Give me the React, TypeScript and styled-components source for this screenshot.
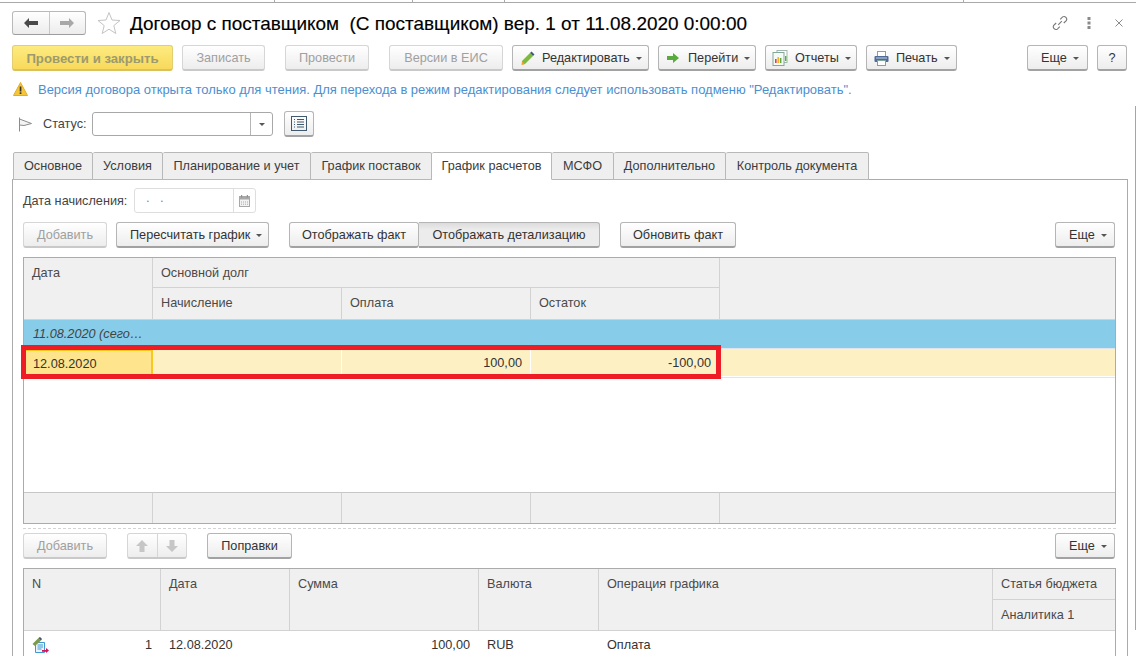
import React, { FC, ReactNode } from 'react'
import styled, { createGlobalStyle, css } from 'styled-components'

const GlobalStyle = createGlobalStyle`
  html, body {
    margin: 0;
    background: #fff;
    font-family: "Liberation Sans", Arial, sans-serif;
    font-size: 12.7px;
    color: #333;
  }
`

const Page = styled.div`
  position: relative;
  width: 1136px;
  height: 656px;
  overflow: hidden;
  background: #fff;
`

const TopStrip = styled.div`
  display: flex;
  height: 2px;
  border-bottom: 1px solid #a9a9a9;
`

const TopTick = styled.i<{ $w: number }>`
  display: block;
  width: ${(p) => p.$w}px;
  height: 2px;
  border-right: 1px solid #a9a9a9;
  box-sizing: border-box;
`

const TitleRow = styled.div`
  display: flex;
  align-items: center;
  height: 24px;
  margin-top: 8px;
  padding: 0 12px;
`

const NavGroup = styled.div`
  display: flex;
  width: 74px;
  height: 24px;
  box-sizing: border-box;
  border: 1px solid #b9b9b9;
  border-bottom-color: #9d9d9d;
  border-radius: 3px;
  background: linear-gradient(#fff, #ececec);
`

const NavCell = styled.div<{ $last?: boolean }>`
  flex: 1;
  display: flex;
  align-items: center;
  justify-content: center;
  ${(p) => !p.$last && 'border-right: 1px solid #c8c8c8;'}
`

const StarSlot = styled.span`
  display: flex;
  margin-left: 11px;
`

const Title = styled.h1`
  margin: 1px 0 0 9px;
  font-size: 18.96px;
  font-weight: 400;
  color: #000;
  white-space: pre;
  -webkit-text-stroke: 0.15px #000;
`

const TitleTools = styled.div`
  display: flex;
  align-items: center;
  margin-left: auto;
  margin-right: 1px;
  gap: 19px;
`

const CloseSlot = styled.span`
  display: flex;
  margin-left: 5px;
`

const Toolbar = styled.div<{ $top?: number }>`
  display: flex;
  align-items: stretch;
  height: 26px;
  margin-top: ${(p) => p.$top ?? 9}px;
`

const MainToolbar = styled(Toolbar)`
  padding-left: 12px;
`

const buttonFace = css`
  background: linear-gradient(#ffffff, #ededed);
  border: 1px solid #b5b5b5;
  border-bottom: 2px solid #a2a2a2;
  border-radius: 3px;
`

const Button = styled.div<{
  $w: number
  $ml?: number
  $off?: boolean
  $primary?: boolean
  $left?: boolean
  $pl?: number
}>`
  ${buttonFace}
  display: flex;
  align-items: center;
  justify-content: ${(p) => (p.$left ? 'flex-start' : 'center')};
  box-sizing: border-box;
  width: ${(p) => p.$w}px;
  margin-left: ${(p) => p.$ml ?? 0}px;
  padding-left: ${(p) => p.$pl ?? 0}px;
  padding-top: 1px;
  white-space: nowrap;
  color: #333;
  ${(p) =>
    p.$off &&
    css`
      color: #a0a0a0;
      border-color: #d6d6d6;
      border-bottom-color: #c9c9c9;
    `}
  ${(p) =>
    p.$primary &&
    css`
      background: linear-gradient(#fdeb7f, #f8d95c);
      border-color: #e3cf73;
      border-bottom-color: #d8c25f;
      color: #9c9a6e;
      font-weight: 700;
      font-size: 13.2px;
    `}
`

const PressedButton = styled(Button)`
  background: linear-gradient(#dcdcdc, #ececec 30%, #ececec);
  border-top-left-radius: 0;
  border-bottom-left-radius: 0;
  border-left: 0;
`

const Caret = styled.i<{ $ml?: number }>`
  display: block;
  width: 0;
  height: 0;
  margin-left: ${(p) => p.$ml ?? 6}px;
  margin-top: 1px;
  border-left: 3px solid transparent;
  border-right: 3px solid transparent;
  border-top: 3px solid #555;
`

const IconSlot = styled.span<{ $mr?: number }>`
  display: flex;
  margin-right: ${(p) => p.$mr ?? 8}px;
`

const InfoRow = styled.div`
  display: flex;
  align-items: center;
  height: 18px;
  margin-top: 9px;
  padding-left: 13px;
  color: #4b8fd1;
  white-space: nowrap;
`

const InfoText = styled.span`
  margin: 1px 0 0 10px;
  font-size: 12.97px;
`

const StatusRow = styled.div`
  display: flex;
  align-items: center;
  height: 26px;
  margin-top: 13px;
  padding-left: 18px;
`

const Label = styled.span`
  color: #444;
  white-space: nowrap;
`

const StatusLabel = styled(Label)`
  width: 49px;
  margin-left: 10px;
`

const Field = styled.div<{ $w: number; $soft?: boolean; $h: number }>`
  display: flex;
  box-sizing: border-box;
  width: ${(p) => p.$w}px;
  height: ${(p) => p.$h}px;
  border: 1px solid ${(p) => (p.$soft ? '#dedede' : '#a8a8a8')};
  border-radius: 3px;
  background: #fff;
`

const FieldValue = styled.div`
  flex: 1;
  padding: 2px 0 0 11px;
  color: #4b8fd1;
  letter-spacing: 3.5px;
`

const FieldAddon = styled.div<{ $w: number; $soft?: boolean }>`
  display: flex;
  align-items: center;
  justify-content: center;
  width: ${(p) => p.$w}px;
  border-left: 1px solid ${(p) => (p.$soft ? '#dedede' : '#b5b5b5')};
`

const ListButton = styled.div`
  ${buttonFace}
  display: flex;
  align-items: center;
  justify-content: center;
  box-sizing: border-box;
  width: 30px;
  height: 26px;
  margin-left: 11px;
`

const TabStrip = styled.div`
  position: relative;
  z-index: 1;
  display: flex;
  height: 28px;
  margin-top: 15px;
  padding-left: 13px;
`

const Tab = styled.div<{ $w: number; $active?: boolean }>`
  display: flex;
  align-items: center;
  justify-content: center;
  box-sizing: border-box;
  width: ${(p) => p.$w}px;
  height: 28px;
  border: 1px solid #b8b8b8;
  border-left-width: 0;
  border-radius: 2px 2px 0 0;
  background: ${(p) => (p.$active ? '#fff' : '#efefef')};
  border-bottom-color: ${(p) => (p.$active ? '#fff' : '#b8b8b8')};
  color: #3c3c3c;
  white-space: nowrap;
  &:first-child {
    border-left-width: 1px;
  }
`

const Panel = styled.div`
  box-sizing: border-box;
  width: 1116px;
  height: 480px;
  margin: -1px 0 0 12px;
  padding: 8px 11px 0 10px;
  border: 1px solid #ababab;
  border-width: 1px 1px 0 1px;
`

const DateRow = styled.div`
  display: flex;
  align-items: center;
  height: 25px;
`

const DateLabel = styled(Label)`
  width: 111px;
`

const Table = styled.div`
  position: relative;
  box-sizing: border-box;
  margin-top: 9px;
  border: 1px solid #ababab;
`

const Grid = styled.div<{ $cols: string }>`
  display: grid;
  grid-template-columns: ${(p) => p.$cols};
`

const HeadCell = styled.div<{ $col?: string; $row?: string; $last?: boolean; $h?: number }>`
  box-sizing: border-box;
  padding: 8px 0 0 8px;
  background: #f0f0f0;
  color: #4a4a4a;
  white-space: nowrap;
  border-right: ${(p) => (p.$last ? 0 : '1px solid #d2d2d2')};
  border-bottom: 1px solid #d2d2d2;
  ${(p) => p.$h && `height: ${p.$h}px;`}
  ${(p) => p.$col && `grid-column: ${p.$col};`}
  ${(p) => p.$row && `grid-row: ${p.$row};`}
`

const GroupRow = styled.div`
  display: flex;
  align-items: center;
  box-sizing: border-box;
  height: 29px;
  padding-left: 9px;
  background: #87cdea;
  border-bottom: 1px solid #dfe3ee;
  color: #444;
  font-style: italic;
`

const DataRow = styled(Grid)`
  height: 29px;
  border-bottom: 1px solid #e3e3ee;
  box-sizing: border-box;
  background: #fdf1c3;
  box-shadow: inset 0 -1px 0 #fff;
`

const DataCell = styled.div<{ $right?: boolean; $current?: boolean; $last?: boolean }>`
  display: flex;
  align-items: center;
  box-sizing: border-box;
  padding: 0 8px;
  justify-content: ${(p) => (p.$right ? 'flex-end' : 'flex-start')};
  border-right: ${(p) => (p.$last ? 0 : '1px solid #fff')};
  color: #333;
  ${(p) =>
    p.$current &&
    css`
      padding-left: 9px;
      background: #fee48c;
      border-top: 2px solid #f7c81e;
      border-right: 2px solid #f7c81e;
    `}
`

const EmptyArea = styled.div`
  height: 114px;
`

const FootCell = styled.div<{ $last?: boolean }>`
  height: 31px;
  background: #f0f0f0;
  border-top: 1px solid #c6c6c6;
  border-right: ${(p) => (p.$last ? 0 : '1px solid #d2d2d2')};
  box-sizing: border-box;
`

const RedFrame = styled.div`
  position: absolute;
  left: -3px;
  top: 87px;
  width: 700px;
  height: 34px;
  box-sizing: border-box;
  border: 5px solid #ee1c25;
`

const DashedLine = styled.div`
  margin-top: 4px;
  border-top: 1px dashed #d4d4d4;
`

const StepGroup = styled.div`
  ${buttonFace}
  border-color: #d6d6d6;
  border-bottom-color: #c9c9c9;
  display: flex;
  box-sizing: border-box;
  width: 60px;
  margin-left: 20px;
`

const StepCell = styled.div<{ $last?: boolean }>`
  flex: 1;
  display: flex;
  align-items: center;
  justify-content: center;
  ${(p) => !p.$last && 'border-right: 1px solid #d6d6d6;'}
`

const SecondTable = styled(Table)`
  height: 100px;
`

const BodyRow = styled(Grid)`
  height: 28px;
`

const BodyCell = styled.div<{ $right?: boolean }>`
  display: flex;
  align-items: center;
  padding: 0 9px 0 8px;
  justify-content: ${(p) => (p.$right ? 'flex-end' : 'flex-start')};
  color: #333;
  white-space: nowrap;
`

const RowIconCell = styled(BodyCell)`
  justify-content: space-between;
`

const ScrollEdge = styled.div`
  position: absolute;
  left: 1135px;
  top: 106px;
  width: 1px;
  height: 524px;
  background: #a5a5a5;
`

/* drawn icons */
const ArrowLeft = ({ color }: { color: string }) => (
  <svg width="14" height="10" viewBox="0 0 14 10">
    <path d="M0 5 L5 0 V3 H14 V7 H5 V10 Z" fill={color} />
  </svg>
)

const ArrowRight = ({ color }: { color: string }) => (
  <svg width="14" height="10" viewBox="0 0 14 10">
    <path d="M14 5 L9 0 V3 H0 V7 H9 V10 Z" fill={color} />
  </svg>
)

const StarIcon = () => (
  <svg width="24" height="24" viewBox="0 0 24 24">
    <path
      d="M12 1.5 L15 9 L23 9.5 L16.8 14.6 L18.8 22.5 L12 18.2 L5.2 22.5 L7.2 14.6 L1 9.5 L9 9 Z"
      fill="#fff"
      stroke="#c4c4c4"
    />
  </svg>
)

const LinkIcon = () => (
  <svg width="16" height="16" viewBox="0 0 16 16" fill="none" stroke="#777" strokeWidth="1.1">
    <path d="M6.2 9.8 L9.8 6.2" />
    <path d="M8.2 4.4 L10.6 1.9 A2.7 2.7 0 0 1 14.3 5.6 L11.8 8" />
    <path d="M7.8 11.6 L5.4 14.1 A2.7 2.7 0 0 1 1.7 10.4 L4.2 8" />
  </svg>
)

const DotsIcon = () => (
  <svg width="4" height="12" viewBox="0 0 4 12">
    <rect x="0.5" y="0" width="3" height="3" fill="#8a8a8a" />
    <rect x="0.5" y="4.5" width="3" height="3" fill="#8a8a8a" />
    <rect x="0.5" y="9" width="3" height="3" fill="#8a8a8a" />
  </svg>
)

const CloseIcon = () => (
  <svg width="8" height="8" viewBox="0 0 8 8" stroke="#8a8a8a" strokeWidth="1">
    <path d="M0.5 0.5 L7.5 7.5 M7.5 0.5 L0.5 7.5" />
  </svg>
)

const PencilIcon = () => (
  <svg width="14" height="14" viewBox="0 0 14 14">
    <path d="M1 10 L9 2 L12 5 L4 13 L1 13.5 Z" fill="#7dbb3c" />
    <path d="M9 2 L10.5 0.5 L13.5 3.5 L12 5 Z" fill="#3d5a78" />
    <path d="M1 10 L4 13 L0.5 14 Z" fill="#f0a030" />
  </svg>
)

const GoIcon = () => (
  <svg width="12" height="10" viewBox="0 0 12 10">
    <path d="M0 3 H6 V0 L12 5 L6 10 V7 H0 Z" fill="#58ab3c" />
  </svg>
)

const ReportIcon = () => (
  <svg width="16" height="16" viewBox="0 0 16 16">
    <rect x="5" y="0.5" width="10" height="12" fill="#fff" stroke="#9fb7ad" />
    <rect x="1" y="2.5" width="11" height="13" fill="#f6faf7" stroke="#84a898" />
    <rect x="3" y="9" width="1.6" height="4" fill="#e43b3b" />
    <rect x="5.4" y="7" width="1.6" height="6" fill="#f1b32c" />
    <rect x="7.8" y="8" width="1.6" height="5" fill="#58ab3c" />
    <rect x="13" y="6" width="1.4" height="5" fill="#58ab3c" />
  </svg>
)

const PrintIcon = () => (
  <svg width="15" height="15" viewBox="0 0 15 15">
    <rect x="3.5" y="0.5" width="8" height="5" fill="#fff" stroke="#8aa0a8" />
    <rect x="0.5" y="5" width="14" height="6" rx="1" fill="#4d6b96" />
    <rect x="3.5" y="9.5" width="8" height="5" fill="#fff" stroke="#7fa59b" />
    <rect x="2" y="6.5" width="11" height="1" fill="#c9d4e2" />
  </svg>
)

const WarningIcon = () => (
  <svg width="15" height="14" viewBox="0 0 15 14">
    <path d="M7.5 0.5 L14.5 13.5 H0.5 Z" fill="#f6c63a" stroke="#e3ad22" strokeLinejoin="round" />
    <rect x="6.7" y="4.5" width="1.7" height="5" fill="#333" />
    <rect x="6.7" y="10.3" width="1.7" height="1.7" fill="#333" />
  </svg>
)

const FlagIcon = () => (
  <svg width="15" height="15" viewBox="0 0 15 15" fill="none" stroke="#8c8c8c">
    <path d="M1.5 0.5 V14.5" />
    <path d="M1.5 2 L13.5 6.5 L6 8.5 L1.5 8 Z" fill="#f4f4f4" />
  </svg>
)

const ListIcon = () => (
  <svg width="16" height="15" viewBox="0 0 16 15" fill="none" stroke="#3f5a70">
    <rect x="0.5" y="0.5" width="15" height="14" />
    <path d="M3 3.5 H4 M6 3.5 H13 M3 6 H4 M6 6 H13 M3 8.5 H4 M6 8.5 H13 M3 11 H4 M6 11 H13" />
  </svg>
)

const CalendarIcon = () => (
  <svg width="11" height="12" viewBox="0 0 11 12">
    <rect x="0.5" y="1.5" width="10" height="10" fill="#f2f2f2" stroke="#a8a8a8" />
    <rect x="0.5" y="1.5" width="10" height="3" fill="#a8a8a8" />
    <rect x="2" y="0" width="1.2" height="2.5" fill="#909090" />
    <rect x="7.8" y="0" width="1.2" height="2.5" fill="#909090" />
    <path d="M2 7 H9 M2 9.2 H9" stroke="#a8a8a8" strokeDasharray="1 1" />
  </svg>
)

const StepUp = () => (
  <svg width="12" height="12" viewBox="0 0 12 12">
    <path d="M6 0 L12 6 H8.5 V12 H3.5 V6 H0 Z" fill="#c6c6c6" />
  </svg>
)

const StepDown = () => (
  <svg width="12" height="12" viewBox="0 0 12 12">
    <path d="M6 12 L12 6 H8.5 V0 H3.5 V6 H0 Z" fill="#c6c6c6" />
  </svg>
)

const RowDocIcon = () => (
  <svg width="17" height="16" viewBox="0 0 17 16">
    <path d="M3.5 5.5 H12.5 V15.5 H3.5 Z" fill="#e8f4fb" stroke="#3d9ad6" />
    <path d="M5.5 8 H11 M5.5 10 H11 M5.5 12 H9.5" stroke="#3d9ad6" />
    <path d="M0.5 7 L6.5 1 L9 3.4 L3 9 Z" fill="#7d9a4a" />
    <path d="M6.5 1 L8 0 L10 2 L9 3.4 Z" fill="#3d4f66" />
    <path d="M10 13 H14 V11 L17 13.5 L14 16 V14.8 H10 Z" fill="#d4145a" />
  </svg>
)

type MenuProps = {
  w: number
  ml: number
  pl: number
  icon?: ReactNode
  mr?: number
  caret?: number
  children: ReactNode
}

const MenuButton: FC<MenuProps> = ({ w, ml, pl, icon, mr, caret, children }) => (
  <Button $w={w} $ml={ml} $left $pl={pl}>
    {icon && <IconSlot $mr={mr}>{icon}</IconSlot>}
    {children}
    <Caret $ml={caret} />
  </Button>
)

const COLS_TOP = '129px 189px 189px 189px 395px'
const COLS_BOTTOM = '137px 129px 189px 120px 394px 122px'

const App: FC = () => (
  <Page>
    <GlobalStyle />
    <TopStrip>
      <TopTick $w={275} />
      <TopTick $w={138} />
      <TopTick $w={92} />
      <TopTick $w={459} />
    </TopStrip>

    <TitleRow>
      <NavGroup>
        <NavCell>
          <ArrowLeft color="#4a4a4a" />
        </NavCell>
        <NavCell $last>
          <ArrowRight color="#a8a8a8" />
        </NavCell>
      </NavGroup>
      <StarSlot>
        <StarIcon />
      </StarSlot>
      <Title>Договор с поставщиком  (С поставщиком) вер. 1 от 11.08.2020 0:00:00</Title>
      <TitleTools>
        <LinkIcon />
        <DotsIcon />
        <CloseSlot>
          <CloseIcon />
        </CloseSlot>
      </TitleTools>
    </TitleRow>

    <MainToolbar $top={10}>
      <Button $w={161} $primary>
        Провести и закрыть
      </Button>
      <Button $w={83} $ml={9} $off>
        Записать
      </Button>
      <Button $w={84} $ml={20} $off>
        Провести
      </Button>
      <Button $w={114} $ml={20} $off>
        Версии в ЕИС
      </Button>
      <MenuButton w={137} ml={9} pl={8} icon={<PencilIcon />} mr={7}>
        Редактировать
      </MenuButton>
      <MenuButton w={98} ml={9} pl={8} icon={<GoIcon />} mr={9}>
        Перейти
      </MenuButton>
      <MenuButton w={92} ml={9} pl={6} icon={<ReportIcon />} mr={7}>
        Отчеты
      </MenuButton>
      <MenuButton w={91} ml={9} pl={7} icon={<PrintIcon />} mr={7}>
        Печать
      </MenuButton>
      <MenuButton w={61} ml={70} pl={13}>
        Еще
      </MenuButton>
      <Button $w={30} $ml={9}>
        ?
      </Button>
    </MainToolbar>

    <InfoRow>
      <WarningIcon />
      <InfoText>
        Версия договора открыта только для чтения. Для перехода в режим редактирования следует использовать подменю
        "Редактировать".
      </InfoText>
    </InfoRow>

    <StatusRow>
      <FlagIcon />
      <StatusLabel>Статус:</StatusLabel>
      <Field $w={181} $h={24}>
        <FieldValue />
        <FieldAddon $w={21}>
          <Caret $ml={0} />
        </FieldAddon>
      </Field>
      <ListButton>
        <ListIcon />
      </ListButton>
    </StatusRow>

    <TabStrip>
      <Tab $w={80}>Основное</Tab>
      <Tab $w={70}>Условия</Tab>
      <Tab $w={148}>Планирование и учет</Tab>
      <Tab $w={121}>График поставок</Tab>
      <Tab $w={120} $active>
        График расчетов
      </Tab>
      <Tab $w={62}>МСФО</Tab>
      <Tab $w={112}>Дополнительно</Tab>
      <Tab $w={143}>Контроль документа</Tab>
    </TabStrip>

    <Panel>
      <DateRow>
        <DateLabel>Дата начисления:</DateLabel>
        <Field $w={122} $h={25} $soft>
          <FieldValue>. .</FieldValue>
          <FieldAddon $w={21} $soft>
            <CalendarIcon />
          </FieldAddon>
        </Field>
      </DateRow>

      <Toolbar>
        <Button $w={84} $off>
          Добавить
        </Button>
        <MenuButton w={153} ml={9} pl={13} caret={6}>
          Пересчитать график
        </MenuButton>
        <Button $w={130} $ml={20}>
          Отображать факт
        </Button>
        <PressedButton $w={181}>Отображать детализацию</PressedButton>
        <Button $w={116} $ml={20}>
          Обновить факт
        </Button>
        <MenuButton w={60} ml={319} pl={13}>
          Еще
        </MenuButton>
      </Toolbar>

      <Table>
        <Grid $cols={COLS_TOP}>
          <HeadCell $row="1 / 3">Дата</HeadCell>
          <HeadCell $col="2 / 5" $h={30}>
            Основной долг
          </HeadCell>
          <HeadCell $col="5" $row="1 / 3" $last />
          <HeadCell $h={32}>Начисление</HeadCell>
          <HeadCell>Оплата</HeadCell>
          <HeadCell>Остаток</HeadCell>
        </Grid>
        <GroupRow>11.08.2020 (сего…</GroupRow>
        <DataRow $cols={COLS_TOP}>
          <DataCell $current>12.08.2020</DataCell>
          <DataCell />
          <DataCell $right>100,00</DataCell>
          <DataCell $right>-100,00</DataCell>
          <DataCell $last />
        </DataRow>
        <EmptyArea />
        <Grid $cols={COLS_TOP}>
          <FootCell />
          <FootCell />
          <FootCell />
          <FootCell />
          <FootCell $last />
        </Grid>
        <RedFrame />
      </Table>

      <DashedLine />

      <Toolbar $top={4}>
        <Button $w={84} $off>
          Добавить
        </Button>
        <StepGroup>
          <StepCell>
            <StepUp />
          </StepCell>
          <StepCell $last>
            <StepDown />
          </StepCell>
        </StepGroup>
        <Button $w={85} $ml={20}>
          Поправки
        </Button>
        <MenuButton w={60} ml={763} pl={13}>
          Еще
        </MenuButton>
      </Toolbar>

      <SecondTable>
        <Grid $cols={COLS_BOTTOM}>
          <HeadCell $row="1 / 3">N</HeadCell>
          <HeadCell $row="1 / 3">Дата</HeadCell>
          <HeadCell $row="1 / 3">Сумма</HeadCell>
          <HeadCell $row="1 / 3">Валюта</HeadCell>
          <HeadCell $row="1 / 3">Операция графика</HeadCell>
          <HeadCell $last $h={31}>
            Статья бюджета
          </HeadCell>
          <HeadCell $last $col="6" $h={31}>
            Аналитика 1
          </HeadCell>
        </Grid>
        <BodyRow $cols={COLS_BOTTOM}>
          <RowIconCell>
            <RowDocIcon />1
          </RowIconCell>
          <BodyCell>12.08.2020</BodyCell>
          <BodyCell $right>100,00</BodyCell>
          <BodyCell>RUB</BodyCell>
          <BodyCell>Оплата</BodyCell>
          <BodyCell />
        </BodyRow>
      </SecondTable>
    </Panel>

    <ScrollEdge />
  </Page>
)

export default App
